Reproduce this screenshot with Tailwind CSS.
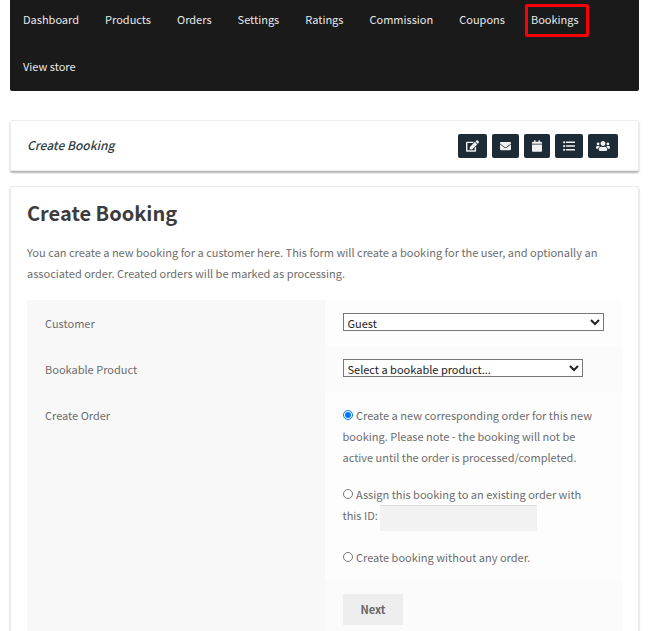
<!DOCTYPE html>
<html lang="en">
<head>
    <meta charset="UTF-8">
    <meta name="viewport" content="width=device-width, initial-scale=1.0">
    <title>Create Booking</title>
    <script src="https://cdn.jsdelivr.net/npm/@tailwindcss/browser@4"></script>
</head>
<body class="bg-white pr-3 pl-[10px] font-['Noto_Sans_CJK_SC',sans-serif] text-[11px] leading-[21px] text-[#6d6d6d]">

    <!-- Top menu -->
    <nav class="flex flex-wrap gap-y-2 rounded-b-xs bg-[#1a1a1a] pb-[5px] leading-[39px] text-[#e8e8e8]">
        <a href="#" class="px-[13px]">Dashboard</a>
        <a href="#" class="px-[13px]">Products</a>
        <a href="#" class="px-[13px]">Orders</a>
        <a href="#" class="px-[13px]">Settings</a>
        <a href="#" class="px-[13px]">Ratings</a>
        <a href="#" class="px-[13px]">Commission</a>
        <a href="#" class="px-[13px]">Coupons</a>
        <a href="#" class="relative px-[13px]">Bookings
            <span class="absolute top-1 right-[3px] bottom-[2px] left-[7px] rounded-xs border-[3px] border-[#fb0007]"></span>
        </a>
        <a href="#" class="px-[13px]">View store</a>
    </nav>

    <!-- Page title and shortcuts -->
    <header class="mt-[29px] flex items-start justify-between rounded-xs border border-[#ececec] pt-[13px] pr-5 pb-3 pl-4 shadow-[0_2px_2px_#b4b4b4]">
        <h2 class="text-[12px] font-medium text-[#2f3f46] italic">Create Booking</h2>
        <div class="flex gap-[5px] text-[#f1f1f1]">
            <a href="#" aria-label="Create booking" class="flex h-6 items-center rounded-xs bg-[#1c2b36] px-2">
                <svg class="h-3 w-[13px]" viewBox="0 0 576 512" fill="currentColor"><path d="M402.6 83.2l90.2 90.2c3.8 3.8 3.8 10 0 13.8L274.4 405.6l-92.8 10.3c-12.4 1.4-22.9-9.1-21.5-21.5l10.3-92.8L388.8 83.2c3.8-3.8 10-3.8 13.8 0zm162-22.9l-48.8-48.8c-15.2-15.2-39.9-15.2-55.2 0l-35.4 35.4c-3.8 3.8-3.8 10 0 13.8l90.2 90.2c3.8 3.8 10 3.8 13.8 0l35.4-35.4c15.2-15.3 15.2-40 0-55.2zM384 346.2V448H64V128h229.8c3.2 0 6.2-1.3 8.5-3.5l40-40c7.6-7.6 2.2-20.5-8.5-20.5H48C21.5 64 0 85.5 0 112v352c0 26.5 21.5 48 48 48h352c26.5 0 48-21.5 48-48V306.2c0-10.7-12.9-16-20.5-8.5l-40 40c-2.2 2.3-3.5 5.3-3.5 8.5z"/></svg>
            </a>
            <a href="#" aria-label="Notifications" class="flex h-6 items-center rounded-xs bg-[#1c2b36] px-2">
                <svg class="h-3 w-[11px]" viewBox="0 0 512 512" fill="currentColor"><path d="M502.3 190.8c3.9-3.1 9.7-.2 9.7 4.7V400c0 26.5-21.5 48-48 48H48c-26.5 0-48-21.5-48-48V195.6c0-5 5.7-7.8 9.7-4.7 22.4 17.4 52.1 39.5 154.1 113.6 21.1 15.4 56.7 47.8 92.2 47.6 35.7.3 72-32.8 92.3-47.6 102-74.1 131.6-96.3 154-113.7zM256 320c23.2.4 56.6-29.2 73.4-41.4 132.7-96.3 142.8-104.7 173.4-128.7 5.8-4.5 9.2-11.5 9.2-18.9v-19c0-26.5-21.5-48-48-48H48c-26.5 0-48 21.5-48 48v19c0 7.4 3.4 14.3 9.2 18.9 30.6 23.9 40.7 32.4 173.4 128.7 16.8 12.2 50.2 41.8 73.4 41.4z"/></svg>
            </a>
            <a href="#" aria-label="Calendar" class="flex h-6 items-center rounded-xs bg-[#1c2b36] px-2">
                <svg class="h-3 w-[10px]" viewBox="0 0 448 512" fill="currentColor"><path d="M12 192h424c6.6 0 12 5.4 12 12v260c0 26.5-21.5 48-48 48H48c-26.5 0-48-21.5-48-48V204c0-6.6 5.4-12 12-12zm436-44v-36c0-26.5-21.5-48-48-48h-48V12c0-6.6-5.4-12-12-12h-40c-6.6 0-12 5.4-12 12v52H160V12c0-6.6-5.4-12-12-12h-40c-6.6 0-12 5.4-12 12v52H48C21.5 64 0 85.5 0 112v36c0 6.6 5.4 12 12 12h424c6.6 0 12-5.4 12-12z"/></svg>
            </a>
            <a href="#" aria-label="All bookings" class="flex h-6 items-center rounded-xs bg-[#1c2b36] px-2">
                <svg class="h-3 w-3" viewBox="0 0 512 512" fill="currentColor"><circle cx="48" cy="96" r="48"/><circle cx="48" cy="256" r="48"/><circle cx="48" cy="416" r="48"/><rect x="128" y="60" width="384" height="72" rx="16"/><rect x="128" y="220" width="384" height="72" rx="16"/><rect x="128" y="380" width="384" height="72" rx="16"/></svg>
            </a>
            <a href="#" aria-label="Resources" class="flex h-6 items-center rounded-xs bg-[#1c2b36] px-2">
                <svg class="h-3 w-[14px]" viewBox="0 0 640 512" fill="currentColor"><path d="M96 224c35.3 0 64-28.7 64-64s-28.7-64-64-64-64 28.7-64 64 28.7 64 64 64zm448 0c35.3 0 64-28.7 64-64s-28.7-64-64-64-64 28.7-64 64 28.7 64 64 64zm32 32h-64c-17.6 0-33.5 7.1-45.1 18.6 40.3 22.1 68.9 62 75.1 109.4h66c17.7 0 32-14.3 32-32v-32c0-35.3-28.7-64-64-64zm-256 0c61.9 0 112-50.1 112-112S381.9 32 320 32 208 82.1 208 144s50.1 112 112 112zm76.8 32h-8.3c-20.8 10-43.9 16-68.5 16s-47.6-6-68.5-16h-8.3C179.6 288 128 339.6 128 403.2V432c0 26.5 21.5 48 48 48h288c26.5 0 48-21.5 48-48v-28.8c0-63.6-51.6-115.2-115.2-115.2zm-223.7-13.4C161.5 263.1 145.6 256 128 256H64c-35.3 0-64 28.7-64 64v32c0 17.7 14.3 32 32 32h65.9c6.3-47.4 34.9-87.3 75.2-109.4z"/></svg>
            </a>
        </div>
    </header>

    <!-- Booking form -->
    <main class="mt-[15px] rounded-xs border border-[#ececec] px-4 pt-3 shadow-[0_2px_2px_#b4b4b4]">
        <h1 class="text-[20px] leading-[27px] font-bold text-[#3c3c3c]">Create Booking</h1>
        <p class="mt-4 mb-4">You can create a new booking for a customer here. This form will create a booking for the user, and optionally an associated order. Created orders will be marked as processing.</p>

        <form>
            <table class="w-full table-fixed border-collapse text-left">
                <tbody>
                    <tr>
                        <th class="bg-[#f8f8f8] px-[18px] py-[13px] align-top leading-5 font-normal"><label for="customer">Customer</label></th>
                        <td class="bg-[#fdfdfd] px-[18px] py-[13px] align-top">
                            <select id="customer" class="block h-[18px] w-full border border-[#767676] bg-white text-[#222222]">
                                <option>Guest</option>
                            </select>
                        </td>
                    </tr>
                    <tr>
                        <th class="bg-[#f8f8f8] px-[18px] py-[13px] align-top leading-5 font-normal"><label for="product">Bookable Product</label></th>
                        <td class="bg-[#fbfbfb] px-[18px] py-[13px] align-top">
                            <select id="product" class="block h-[18px] w-[240px] border border-[#767676] bg-white text-[#222222]">
                                <option>Select a bookable product...</option>
                            </select>
                        </td>
                    </tr>
                    <tr>
                        <th class="bg-[#f8f8f8] px-[18px] py-[13px] align-top font-normal">Create Order</th>
                        <td class="bg-[#fdfdfd] px-[18px] py-[13px] align-top">
                            <p class="mb-4">
                                <input type="radio" name="order" id="order-new" class="mr-px h-[10px] w-[10px]" checked>
                                <label for="order-new">Create a new corresponding order for this new booking. Please note - the booking will not be active until the order is processed/completed.</label>
                            </p>
                            <p class="mb-4">
                                <input type="radio" name="order" id="order-existing" class="mr-px h-[10px] w-[10px]">
                                <label for="order-existing">Assign this booking to an existing order with<br>this ID:</label>
                                <input type="text" aria-label="Order ID" class="h-[26px] w-[157px] border-t border-[#dddddd] bg-[#f2f2f2] px-2 align-top">
                            </p>
                            <p>
                                <input type="radio" name="order" id="order-none" class="mr-px h-[10px] w-[10px]">
                                <label for="order-none">Create booking without any order.</label>
                            </p>
                        </td>
                    </tr>
                    <tr>
                        <td class="bg-[#f8f8f8]"></td>
                        <td class="bg-[#fbfbfb] px-[18px] py-[13px] align-top">
                            <button type="submit" class="block bg-[#eeeeee] px-[18px] py-[5px] font-bold text-[#666666]">Next</button>
                        </td>
                    </tr>
                </tbody>
            </table>
        </form>
    </main>

</body>
</html>
